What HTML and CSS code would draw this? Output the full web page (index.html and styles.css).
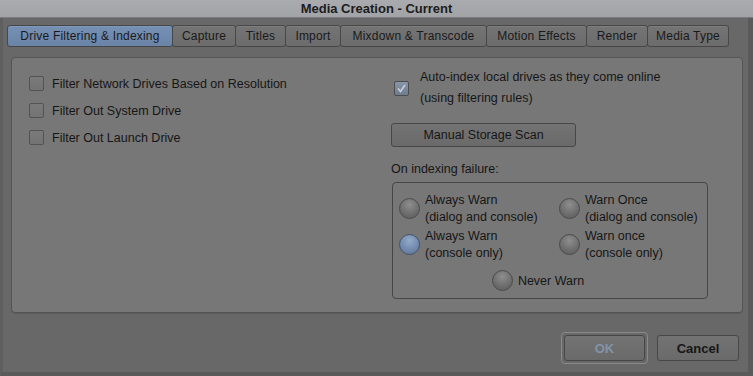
FILE: index.html
```html
<!DOCTYPE html>
<html>
<head>
    <title>Media Creation - Current</title>
    <meta name="viewport" content="width=device-width, initial-scale=1.0">
    <link rel="stylesheet" href="styles.css">
</head>
<body>
    <div class="window">
        <div class="titlebar">Media Creation - Current</div>

        <div class="tabs">
            <div class="tab active">Drive Filtering &amp; Indexing</div>
            <div class="tab tab-capture">Capture</div>
            <div class="tab tab-titles">Titles</div>
            <div class="tab tab-import">Import</div>
            <div class="tab tab-mixdown">Mixdown &amp; Transcode</div>
            <div class="tab tab-motion">Motion Effects</div>
            <div class="tab tab-render">Render</div>
            <div class="tab tab-media">Media Type</div>
        </div>

        <div class="panel">
            <div class="col-left">
                <label class="check-row"><span class="checkbox"></span>Filter Network Drives Based on Resolution</label>
                <label class="check-row"><span class="checkbox"></span>Filter Out System Drive</label>
                <label class="check-row"><span class="checkbox"></span>Filter Out Launch Drive</label>
            </div>

            <div class="col-right">
                <label class="auto-index">
                    <span class="checkbox checked">
                        <svg width="11" height="11" viewBox="0 0 11 11"><path d="M2 5.5 L4.5 8.5 L9 2" fill="none" stroke="#c9d2dc" stroke-width="1.6"/></svg>
                    </span>
                    <span>Auto-index local drives as they come online<br>(using filtering rules)</span>
                </label>

                <button class="btn scan-btn">Manual Storage Scan</button>

                <div class="group-label">On indexing failure:</div>
                <div class="group">
                    <div class="radio-grid">
                        <label class="radio-row"><span class="radio"></span><span>Always Warn<br>(dialog and console)</span></label>
                        <label class="radio-row"><span class="radio"></span><span>Warn Once<br>(dialog and console)</span></label>
                        <label class="radio-row"><span class="radio selected"></span><span>Always Warn<br>(console only)</span></label>
                        <label class="radio-row"><span class="radio"></span><span>Warn once<br>(console only)</span></label>
                    </div>
                    <label class="radio-row never"><span class="radio"></span><span>Never Warn</span></label>
                </div>
            </div>
        </div>

        <div class="footer">
            <div class="focus-ring"><button class="btn dialog-btn ok">OK</button></div>
            <button class="btn dialog-btn cancel">Cancel</button>
        </div>
    </div>
</body>
</html>
```

FILE: styles.css
```css
:root {
    --bg: #686868;
    --panel: #777777;
    --border: #474747;
    --text: #161616;
    --blue: #6f88aa;
}

* {
    box-sizing: border-box;
}

html, body {
    margin: 0;
    padding: 0;
}

body {
    width: 753px;
    height: 376px;
    overflow: hidden;
    background-color: var(--bg);
    font-family: "Liberation Sans", Arial, sans-serif;
    font-size: 12.5px;
    color: var(--text);
}

.window {
    height: 376px;
    border-left: 3px solid #5f5f5f;
    border-right: 5px solid #5a5a5a;
    border-bottom: 4px solid #5a5a5a;
}

.titlebar {
    height: 18px;
    margin: 0 -5px 0 -3px;
    background: linear-gradient(#a9abaf, #a1a3a7);
    border-bottom: 1px solid #7c7c7e;
    text-align: center;
    font-weight: bold;
    font-size: 13px;
    line-height: 17px;
    color: #1c1c1c;
}

/* tabs */
.tabs {
    display: flex;
    margin: 7px 0 0 4px;
    height: 22px;
}

.tab {
    height: 22px;
    border: 1px solid var(--border);
    border-radius: 3px;
    background: linear-gradient(#747474, #6c6c6c);
    box-shadow: inset 0 1px 0 rgba(255,255,255,0.08);
    font-size: 12px;
    line-height: 20px;
    letter-spacing: 0.2px;
    text-align: center;
    color: #1a1a1a;
    margin-right: -1px;
}

.tab.active {
    width: 166px;
    background: linear-gradient(#7690b3, #6a84a8);
}

.tab-capture { width: 64px; }
.tab-titles { width: 51px; }
.tab-import { width: 56px; }
.tab-mixdown { width: 147px; }
.tab-motion { width: 101px; }
.tab-render { width: 62px; }
.tab-media { width: 82px; }

/* main panel */
.panel {
    display: grid;
    grid-template-columns: 362px 1fr;
    margin: 10px 5px 0 8px;
    height: 256px;
    padding: 17px 0 0 17px;
    background-color: var(--panel);
    border: 1px solid #555;
    border-radius: 4px;
    box-shadow: 0 1px 0 #5c5c5c;
}

.col-left {
    display: flex;
    flex-direction: column;
}

.check-row {
    display: flex;
    align-items: center;
    gap: 8px;
    height: 27px;
    margin-top: -5px;
    margin-bottom: 5px;
}

.checkbox {
    flex: none;
    display: flex;
    align-items: center;
    justify-content: center;
    width: 15px;
    height: 15px;
    border: 1px solid #535353;
    border-radius: 2px;
    background: linear-gradient(#7a7a7a, #737373);
}

.checkbox.checked {
    background: linear-gradient(#8896a8, #6e7c90);
    border-color: #4c4c4c;
}

.col-right {
    display: flex;
    flex-direction: column;
    margin-top: -8px;
}

.auto-index {
    display: flex;
    align-items: center;
    gap: 11px;
    padding-left: 3px;
    line-height: 21px;
}

.btn {
    font-family: "Liberation Sans", Arial, sans-serif;
    font-size: 12.5px;
    color: var(--text);
    background: linear-gradient(#737373, #6a6a6a);
    border: 1px solid var(--border);
    border-radius: 3px;
    padding: 0;
}

.scan-btn {
    width: 185px;
    height: 24px;
    margin-top: 14px;
}

.group-label {
    margin-top: 13px;
    line-height: 18px;
}

.group {
    width: 316px;
    height: 117px;
    margin-top: 4px;
    margin-left: 1px;
    border: 1px solid #464646;
    border-radius: 4px;
    padding: 9px 0 0 6px;
}

.radio-grid {
    display: grid;
    grid-template-columns: 160px 1fr;
    row-gap: 3px;
}

.radio-row {
    display: flex;
    align-items: center;
    gap: 5px;
    line-height: 16.5px;
}

.radio {
    flex: none;
    width: 21px;
    height: 21px;
    border-radius: 50%;
    border: 1px solid #4a4a4a;
    background: radial-gradient(circle at 50% 30%, #8e8e8e, #6c6c6c 60%, #5c5c5c);
}

.radio.selected {
    background: radial-gradient(circle at 50% 30%, #93aacb, #6f88ab 60%, #5d7394);
    border-color: #43536a;
}

.radio-row.never {
    justify-content: center;
    margin: 9px 30px 0 0;
    line-height: 20px;
}

/* bottom buttons */
.footer {
    display: flex;
    justify-content: flex-end;
    align-items: center;
    gap: 9px;
    margin: 19px 9px 0 0;
}

.focus-ring {
    padding: 2px;
    border: 1px solid #8a8a8a;
    border-radius: 4px;
}

.dialog-btn {
    width: 82px;
    height: 26px;
    font-size: 13px;
    font-weight: bold;
}

.dialog-btn.ok {
    width: 81px;
    color: #8294a8;
}
```
